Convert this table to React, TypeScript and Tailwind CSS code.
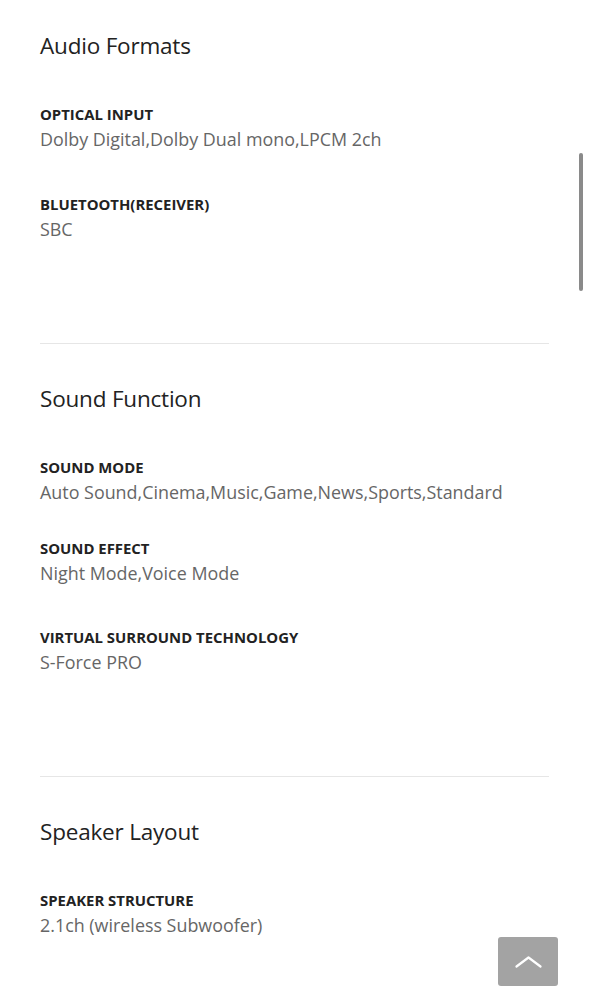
import React from "react";

const Label = ({ children }: { children: React.ReactNode }) => (
  <div className="text-[14.9px] font-bold leading-[20px] text-[#222222]">{children}</div>
);

const Value = ({ children }: { children: React.ReactNode }) => (
  <div className="mt-[3px] text-[17.9px] leading-[24px] text-[#666666]">{children}</div>
);

const Heading = ({ children }: { children: React.ReactNode }) => (
  <h2 className="text-[22.5px] leading-[30px] text-[#222222] tracking-[-0.2px]">{children}</h2>
);

export default function App() {
  return (
    <div
      className="relative min-h-[1000px] w-full bg-white"
      style={{ fontFamily: '"Open Sans", "Noto Sans", sans-serif' }}
    >
      <div className="px-10">
        {/* Audio Formats */}
        <section className="pt-[31px] pb-[102px]">
          <Heading>Audio Formats</Heading>
          <div className="mt-[43px]">
            <Label>OPTICAL INPUT</Label>
            <Value>Dolby Digital,Dolby Dual mono,LPCM 2ch</Value>
          </div>
          <div className="mt-[43px]">
            <Label>BLUETOOTH(RECEIVER)</Label>
            <Value>SBC</Value>
          </div>
        </section>
        <div className="border-t border-[#e6e6e6]" />
        {/* Sound Function */}
        <section className="pt-[40px] pb-[102px]">
          <Heading>Sound Function</Heading>
          <div className="mt-[43px]">
            <Label>SOUND MODE</Label>
            <Value>Auto Sound,Cinema,Music,Game,News,Sports,Standard</Value>
          </div>
          <div className="mt-[34px]">
            <Label>SOUND EFFECT</Label>
            <Value>Night Mode,Voice Mode</Value>
          </div>
          <div className="mt-[42px]">
            <Label>VIRTUAL SURROUND TECHNOLOGY</Label>
            <Value>S-Force PRO</Value>
          </div>
        </section>
        <div className="border-t border-[#e6e6e6]" />
        {/* Speaker Layout */}
        <section className="pt-[40px] pb-[60px]">
          <Heading>Speaker Layout</Heading>
          <div className="mt-[43px]">
            <Label>SPEAKER STRUCTURE</Label>
            <Value>2.1ch (wireless Subwoofer)</Value>
          </div>
        </section>
      </div>

      {/* scrollbar overlay */}
      <div className="absolute left-[579px] top-[153px] h-[138px] w-[4px] rounded-full bg-[#8a8a8a]" />

      {/* back to top button */}
      <button className="absolute left-[498px] top-[937px] flex h-[49px] w-[60px] items-center justify-center rounded-[3px] bg-[#a3a3a3]">
        <svg width="27" height="12" viewBox="0 0 27 12" fill="none">
          <path d="M1.5 10.5 L13.5 1.5 L25.5 10.5" stroke="white" strokeWidth="2.2" strokeLinecap="round" strokeLinejoin="round" />
        </svg>
      </button>
    </div>
  );
}
